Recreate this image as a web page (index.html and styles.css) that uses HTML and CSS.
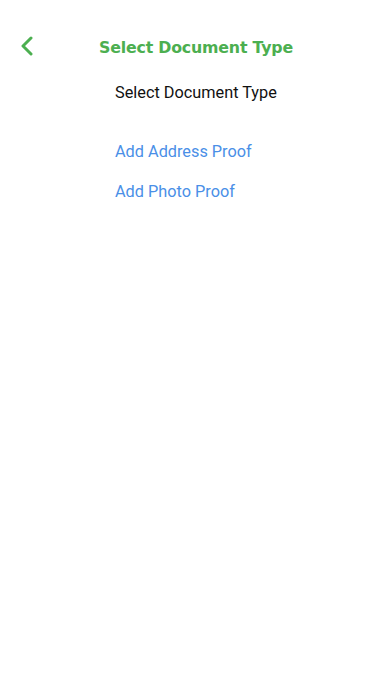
FILE: index.html
```html
<!DOCTYPE html>
<html lang="en">
    <head>
        <meta charset="UTF-8">
        <meta name="viewport" content="width=device-width, initial-scale=1.0">
        <title>Select Document Type</title>
        <link rel="stylesheet" href="styles.css">
    </head>
    <body>
        <div class="header">
            <a class="back" href="#">
                <svg width="14" height="20" viewBox="0 0 14 20">
                    <path d="M11 2 L3 10 L11 18" fill="none" stroke="#4caf50" stroke-width="3" stroke-linecap="round" stroke-linejoin="round"/>
                </svg>
            </a>
            <h1>Select Document Type</h1>
        </div>
        <div class="content">
            <p class="label">Select Document Type</p>
            <ul class="options">
                <li><a href="#">Add Address Proof</a></li>
                <li><a href="#">Add Photo Proof</a></li>
            </ul>
        </div>
    </body>
</html>
```

FILE: styles.css
```css
body {
    margin: 0;
    padding: 0;
    background-color: #fff;
    font-family: Roboto, "Liberation Sans", sans-serif;
}

.header {
    position: relative;
    height: 52px;
    margin-top: 20px;
    display: flex;
    align-items: center;
    justify-content: center;
}

.back {
    position: absolute;
    left: 20px;
    top: 16px;
    display: flex;
}

h1 {
    margin: 2px 0 0;
    font-family: "DejaVu Sans", sans-serif;
    font-size: 15.8px;
    font-weight: bold;
    color: #4caf50;
    letter-spacing: -0.2px;
}

.content {
    padding-left: 115px;
}

.label {
    margin: 11px 0 0;
    font-size: 16.3px;
    color: #111;
}

.options {
    list-style: none;
    margin: 40px 0 0;
    padding: 0;
}

.options li {
    height: 40px;
}

.options a {
    font-size: 16.3px;
    color: #4a8fe7;
    text-decoration: none;
}
```
